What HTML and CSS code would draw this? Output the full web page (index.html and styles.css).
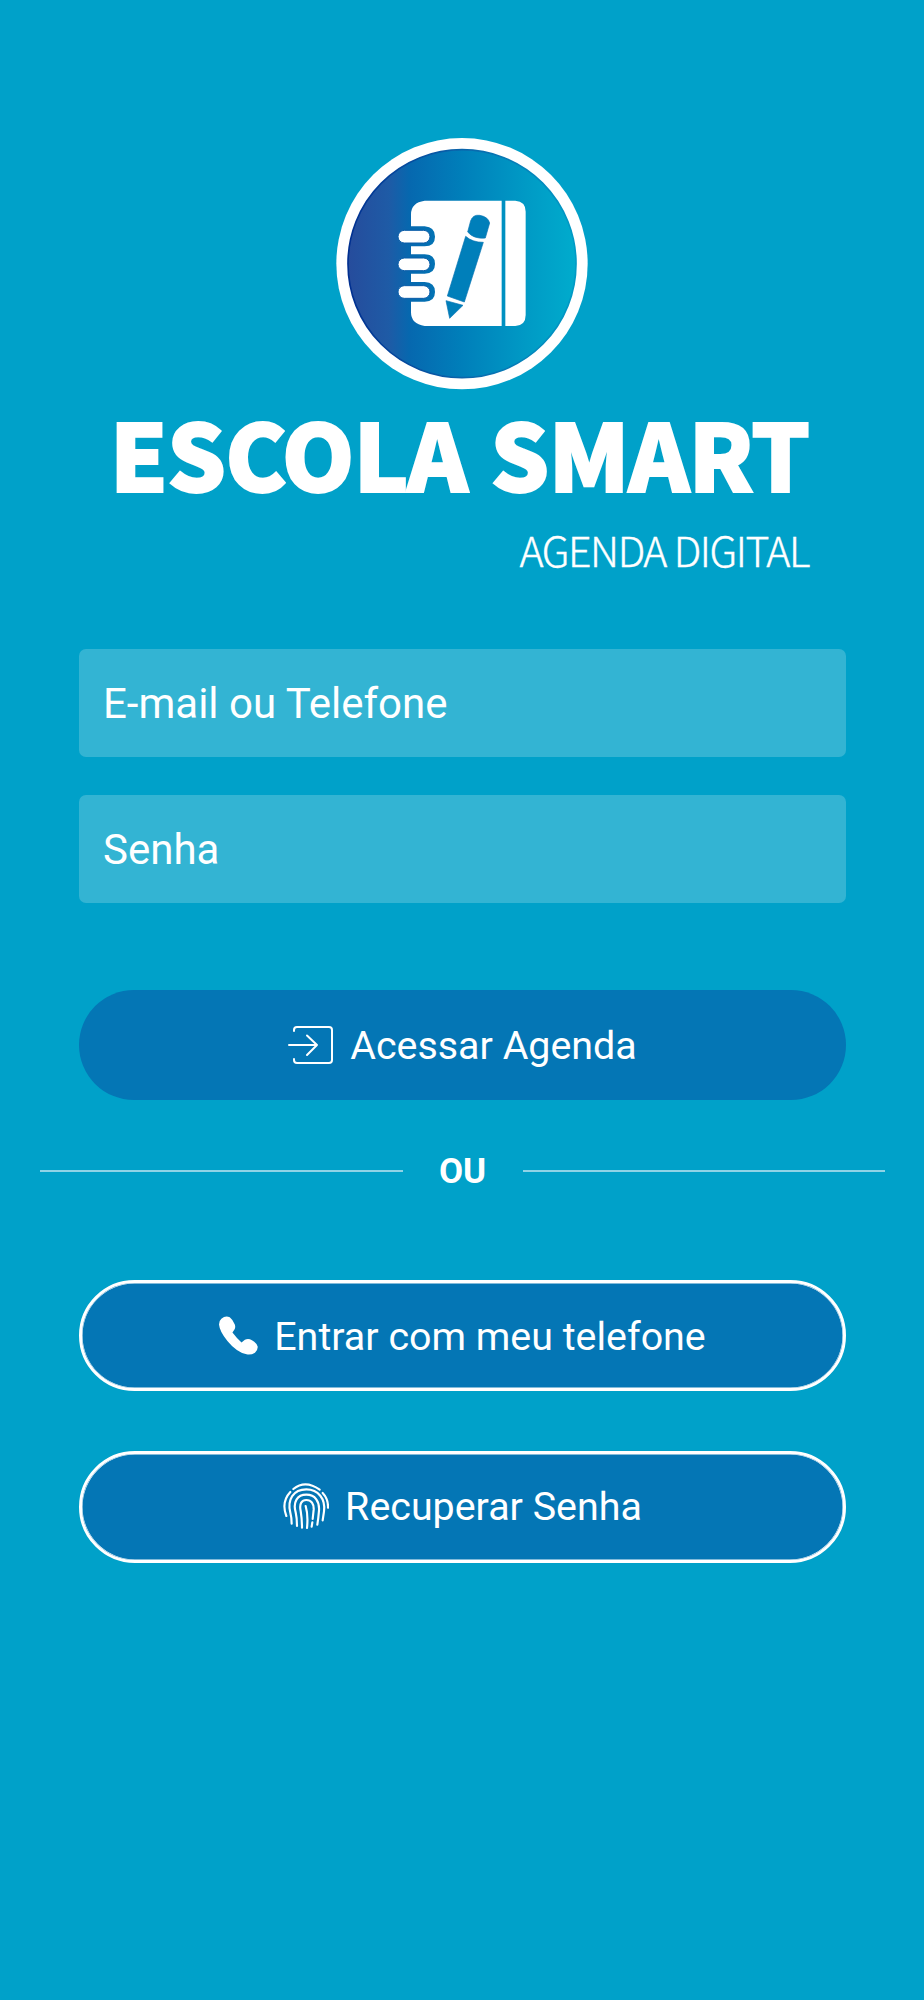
FILE: index.html
```html
<!DOCTYPE html>
<html lang="pt-BR">
<head>
    <meta charset="UTF-8">
    <meta name="viewport" content="width=device-width, initial-scale=1.0">
    <title>Escola Smart - Agenda Digital</title>
    <link rel="stylesheet" href="styles.css">
</head>
<body>
    <main class="login">
        <header class="brand">
            <svg class="brand-logo" viewBox="0 0 795 795" aria-hidden="true">
                <defs>
                    <linearGradient id="badge" x1="0" y1="0" x2="1" y2="0">
                        <stop offset="0" stop-color="#264c9c"/>
                        <stop offset="0.18" stop-color="#1e5ba6"/>
                        <stop offset="0.27" stop-color="#0668af"/>
                        <stop offset="0.5" stop-color="#007fba"/>
                        <stop offset="0.78" stop-color="#009ac5"/>
                        <stop offset="1" stop-color="#00accd"/>
                    </linearGradient>
                    <linearGradient id="edge" x1="0" y1="0" x2="1" y2="0">
                        <stop offset="0" stop-color="#002f90"/>
                        <stop offset="0.5" stop-color="#0a64ab"/>
                        <stop offset="1" stop-color="#009bc6"/>
                    </linearGradient>
                </defs>
                <circle cx="396" cy="401" r="377" fill="#fff"/>
                <circle cx="396" cy="401" r="342" fill="url(#badge)" stroke="url(#edge)" stroke-width="5"/>
                <path fill="#fff" d="M284 212H515V588H284Q243 582 243 547V515H284Q315 515 315 486T284 456H243V431H284Q315 431 315 402T284 373H243V349H284Q315 349 315 320T284 289H243V253Q243 218 284 212Z"/>
                <path fill="#fff" d="M526 212H556Q587 214 587 245V555Q587 586 556 588H526Z"/>
                <!-- binder rings -->
                <g fill="#fff" stroke="#0a5ca8" stroke-width="3">
                    <rect x="204" y="301" width="96" height="38" rx="19"/>
                    <rect x="204" y="384" width="96" height="38" rx="19"/>
                    <rect x="204" y="467" width="96" height="38" rx="19"/>
                </g>
                <!-- pencil -->
                <g fill="#007fba" stroke="#0874b3" stroke-width="2">
                    <path d="M422 272Q430 253 449 256Q474 260 479 279L466 324Q432 328 413 306Z"/>
                    <path d="M407 319Q427 337 460 337L403 516L352 498Z"/>
                    <path d="M348 512L399 526L359 565Z"/>
                </g>
            </svg>
            <h1 class="brand-name">ESCOLA SMART</h1>
            <p class="brand-tagline">AGENDA DIGITAL</p>
        </header>

        <form class="login-form">
            <input type="text" class="field" placeholder="E-mail ou Telefone" aria-label="E-mail ou Telefone">
            <input type="password" class="field" placeholder="Senha" aria-label="Senha">
            <button type="button" class="btn btn-primary">
                <svg class="icon icon-enter" viewBox="0 0 46 40" aria-hidden="true">
                    <path d="M6 6V5Q6 2 9 2H41Q44 2 44 5V35Q44 38 41 38H9Q6 38 6 35V34M1 20H29M19 10.500L29 20L19 30"/>
                </svg>
                <span>Acessar Agenda</span>
            </button>
        </form>

        <div class="divider"><span>OU</span></div>

        <div class="other-options">
            <button type="button" class="btn btn-outline">
                <svg class="icon icon-phone" viewBox="0 0 116 116" aria-hidden="true">
                    <path d="M7 8Q20-3 32 4Q40 10 47 25Q50 33 46 40L40 49Q52 65 67 79L77 71Q87 66 98 72Q112 80 115 91Q116 101 107 109Q95 117 82 114Q52 107 25 74Q2 46 0 25Q0 14 7 8Z"/>
                </svg>
                <span>Entrar com meu telefone</span>
            </button>
            <button type="button" class="btn btn-outline btn-recover">
                <svg class="icon icon-finger" viewBox="0 0 138 138" aria-hidden="true">
                    <path d="M31 18Q67-11 110 20M22 27Q-6 57 10 99M119 30Q136 48 135 74"/>
                    <path d="M26 122Q26 104 22 89C12 50 31 19 70 19C106 19 128 48 123 85L119 112"/>
                    <path d="M42 129Q42 105 38 88C29 57 43 35 70 35C97 35 110 56 108 83Q106 108 103 125"/>
                    <path d="M57 134Q57 108 53 84C48 61 57 51 70 51C85 51 93 63 92 80L89 108M88 118L86 131"/>
                    <path d="M68 69Q76 96 72 135"/>
                </svg>
                <span>Recuperar Senha</span>
            </button>
        </div>
    </main>
</body>
</html>
```

FILE: styles.css
```css
* {
    box-sizing: border-box;
}

body {
    margin: 0;
    min-height: 2000px;
    background-color: #00a1c9;
    color: #fff;
    font-family: Roboto, sans-serif;
}

.login {
    padding: 130px 78px 0 79px;
}

.brand {
    display: flex;
    flex-direction: column;
    align-items: center;
    height: 519px;
}

.brand-logo {
    display: block;
    width: 265px;
    height: 265px;
}

.brand-name {
    margin: 2px 6px 0 0;
    font-family: "Noto Sans CJK SC", sans-serif;
    font-size: 92.5px;
    font-weight: 900;
    line-height: 110px;
    letter-spacing: -1px;
    word-spacing: 3px;
    white-space: nowrap;
    -webkit-text-stroke: 2px #fff;
}

.brand-tagline {
    align-self: flex-end;
    margin: 17px 37px 0 0;
    font-family: "Noto Sans CJK SC", sans-serif;
    font-size: 41px;
    font-weight: 300;
    line-height: 50px;
    letter-spacing: -1.4px;
    white-space: nowrap;
    -webkit-text-stroke: 0.4px #fff;
}

.login-form {
    display: flex;
    flex-direction: column;
}

.field {
    width: 100%;
    height: 108px;
    margin-bottom: 38px;
    padding: 0 24px;
    border: none;
    border-radius: 7px;
    background-color: #33b4d3;
    color: #fff;
    font-family: inherit;
    font-size: 42px;
}

.field::placeholder {
    color: #fff;
    opacity: 1;
}

.btn {
    display: flex;
    align-items: center;
    justify-content: center;
    width: 100%;
    height: 110px;
    padding: 0;
    border: none;
    border-radius: 55px;
    background-color: #0476b5;
    color: #fff;
    font-family: inherit;
    font-size: 39.4px;
    line-height: 48px;
}

.btn span {
    padding-top: 2px;
}

.btn-primary {
    margin-top: 49px;
}

.btn-outline {
    height: 111px;
    border: 3px solid #fff;
    border-radius: 56px;
    box-shadow: inset 0 0 0 0.5px #fff;
}

.btn-recover {
    height: 112px;
    padding-bottom: 2px;
}

.icon {
    flex: none;
    margin-right: 16px;
}

.icon-enter {
    width: 46px;
    height: 40px;
    fill: none;
    stroke: #fff;
    stroke-width: 2;
    stroke-linecap: round;
    stroke-linejoin: round;
}

.icon-phone {
    width: 39px;
    height: 39px;
    fill: #fff;
}

.icon-finger {
    width: 46px;
    height: 46px;
    fill: none;
    stroke: #fff;
    stroke-width: 6.5;
    stroke-linecap: round;
}

.divider {
    display: flex;
    align-items: center;
    margin: 51px -39px 0;
    height: 40px;
    font-size: 35px;
    font-weight: 700;
}

.divider::before,
.divider::after {
    content: "";
    flex: 1;
    height: 2px;
    background-color: #8fd3e6;
}

.divider span {
    width: 120px;
    text-align: center;
}

.other-options {
    display: flex;
    flex-direction: column;
    gap: 60px;
    margin-top: 89px;
}
```
